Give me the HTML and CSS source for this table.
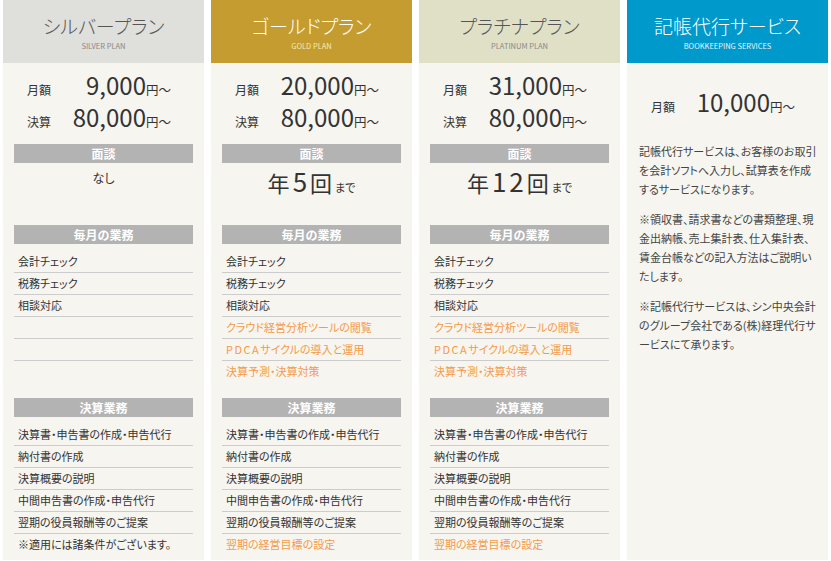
FILE: index.html
```html
<!DOCTYPE html>
<html lang="ja">
<head>
    <meta charset="UTF-8">
    <meta name="viewport" content="width=device-width, initial-scale=1.0">
    <title>料金プラン</title>
    <link rel="stylesheet" href="styles.css">
</head>
<body>
    <div class="plans">
        <!-- シルバー -->
        <div class="plan silver">
            <div class="plan-head">
                <h2>シルバープラン</h2>
                <p>SILVER PLAN</p>
            </div>
            <div class="plan-body">
                <div class="price">
                    <div class="price-row"><span class="price-label">月額</span><span class="price-num">9,000</span><span class="price-unit">円～</span></div>
                    <div class="price-row"><span class="price-label">決算</span><span class="price-num">80,000</span><span class="price-unit">円～</span></div>
                </div>
                <h3 class="bar">面談</h3>
                <p class="meeting">なし</p>
                <h3 class="bar">毎月の業務</h3>
                <ul class="tasks">
                    <li>会計チェック</li>
                    <li>税務チェック</li>
                    <li>相談対応</li>
                    <li></li>
                    <li></li>
                    <li></li>
                </ul>
                <h3 class="bar">決算業務</h3>
                <ul class="tasks">
                    <li>決算書・申告書の作成・申告代行</li>
                    <li>納付書の作成</li>
                    <li>決算概要の説明</li>
                    <li>中間申告書の作成・申告代行</li>
                    <li>翌期の役員報酬等のご提案</li>
                    <li>※適用には諸条件がございます。</li>
                </ul>
            </div>
        </div>

        <!-- ゴールド -->
        <div class="plan gold">
            <div class="plan-head">
                <h2>ゴールドプラン</h2>
                <p>GOLD PLAN</p>
            </div>
            <div class="plan-body">
                <div class="price">
                    <div class="price-row"><span class="price-label">月額</span><span class="price-num">20,000</span><span class="price-unit">円～</span></div>
                    <div class="price-row"><span class="price-label">決算</span><span class="price-num">80,000</span><span class="price-unit">円～</span></div>
                </div>
                <h3 class="bar">面談</h3>
                <p class="meeting big">年<span class="count">5</span>回<small>まで</small></p>
                <h3 class="bar">毎月の業務</h3>
                <ul class="tasks">
                    <li>会計チェック</li>
                    <li>税務チェック</li>
                    <li>相談対応</li>
                    <li class="extra">クラウド経営分析ツールの閲覧</li>
                    <li class="extra"><span class="wide">PDCA</span>サイクルの導入と運用</li>
                    <li class="extra">決算予測・決算対策</li>
                </ul>
                <h3 class="bar">決算業務</h3>
                <ul class="tasks">
                    <li>決算書・申告書の作成・申告代行</li>
                    <li>納付書の作成</li>
                    <li>決算概要の説明</li>
                    <li>中間申告書の作成・申告代行</li>
                    <li>翌期の役員報酬等のご提案</li>
                    <li class="extra">翌期の経営目標の設定</li>
                </ul>
            </div>
        </div>

        <!-- プラチナ -->
        <div class="plan platinum">
            <div class="plan-head">
                <h2>プラチナプラン</h2>
                <p>PLATINUM PLAN</p>
            </div>
            <div class="plan-body">
                <div class="price">
                    <div class="price-row"><span class="price-label">月額</span><span class="price-num">31,000</span><span class="price-unit">円～</span></div>
                    <div class="price-row"><span class="price-label">決算</span><span class="price-num">80,000</span><span class="price-unit">円～</span></div>
                </div>
                <h3 class="bar">面談</h3>
                <p class="meeting big">年<span class="count">12</span>回<small>まで</small></p>
                <h3 class="bar">毎月の業務</h3>
                <ul class="tasks">
                    <li>会計チェック</li>
                    <li>税務チェック</li>
                    <li>相談対応</li>
                    <li class="extra">クラウド経営分析ツールの閲覧</li>
                    <li class="extra"><span class="wide">PDCA</span>サイクルの導入と運用</li>
                    <li class="extra">決算予測・決算対策</li>
                </ul>
                <h3 class="bar">決算業務</h3>
                <ul class="tasks">
                    <li>決算書・申告書の作成・申告代行</li>
                    <li>納付書の作成</li>
                    <li>決算概要の説明</li>
                    <li>中間申告書の作成・申告代行</li>
                    <li>翌期の役員報酬等のご提案</li>
                    <li class="extra">翌期の経営目標の設定</li>
                </ul>
            </div>
        </div>

        <!-- 記帳代行 -->
        <div class="plan bookkeeping">
            <div class="plan-head">
                <h2>記帳代行サービス</h2>
                <p>BOOKKEEPING SERVICES</p>
            </div>
            <div class="plan-body">
                <div class="price single">
                    <div class="price-row"><span class="price-label">月額</span><span class="price-num">10,000</span><span class="price-unit">円～</span></div>
                </div>
                <div class="note">
                    <p>記帳代行サービスは、お客様のお取引を会計ソフトへ入力し、試算表を作成するサービスになります。</p>
                    <p>※領収書、請求書などの書類整理、現金出納帳、売上集計表、仕入集計表、賃金台帳などの記入方法はご説明いたします。</p>
                    <p>※記帳代行サービスは、シン中央会計のグループ会社である(株)経理代行サービスにて承ります。</p>
                </div>
            </div>
        </div>
    </div>
</body>
</html>
```

FILE: styles.css
```css
body {
    margin: 0;
    background: #fff;
    font-family: "Noto Sans CJK JP", "Noto Sans", sans-serif;
    color: #333;
    font-feature-settings: "palt";
}
.plans {
    display: grid;
    grid-template-columns: repeat(4, 201px);
    gap: 7px;
    padding: 0 3px;
}
.plan {
    background: #f6f5ef;
    height: 560px;
}
.plan-head {
    height: 63px;
    text-align: center;
    color: #555;
}
.plan-head h2 {
    margin: 0;
    padding-top: 12px;
    font-size: 19px;
    font-weight: 300;
    line-height: 28px;
}
.plan-head p {
    margin: 0;
    padding-top: 1px;
    font-size: 7.5px;
    line-height: 10px;
    color: #888;
}
.silver .plan-head { background: #dfdfdb; }
.gold .plan-head { background: #c59c2f; color: #fff; }
.gold .plan-head p { color: #f6ecb0; }
.platinum .plan-head { background: #e0e0c6; }
.bookkeeping .plan-head { background: #0099cc; color: #fff; }
.bookkeeping .plan-head p { color: #e4f4fb; }

.plan-body {
    padding: 0 11px;
}
.price {
    padding: 6px 0 11px 13px;
}
.price.single {
    padding-top: 23px;
}
.price-row {
    display: flex;
    align-items: baseline;
    height: 32px;
    line-height: 32px;
}
.price-label {
    width: 30px;
    font-size: 12px;
}
.price-num {
    width: 89px;
    text-align: right;
    font-size: 24px;
    font-weight: 400;
    color: #333;
}
.price-unit {
    font-size: 12.5px;
    font-feature-settings: normal;
}

.bar {
    margin: 0;
    background: #b3b3b3;
    color: #fff;
    font-size: 12px;
    font-weight: bold;
    text-align: center;
    height: 19px;
    line-height: 19px;
}
.meeting {
    margin: 0;
    height: 62px;
    text-align: center;
    font-size: 12px;
    line-height: 30px;
}
.meeting.big {
    font-size: 22px;
    line-height: 39px;
    letter-spacing: 3px;
    color: #333;
}
.meeting .count {
    font-size: 26px;
    line-height: 1;
}
.meeting small {
    font-size: 11px;
    letter-spacing: 0;
}
.tasks {
    list-style: none;
    margin: 7px 0 16px;
    padding: 0;
}
.tasks:last-child {
    margin-bottom: 0;
}
.tasks li {
    height: 21px;
    line-height: 21px;
    padding-left: 4px;
    font-size: 11px;
    border-bottom: 1px solid #ccc;
}
.tasks li:last-child {
    border-bottom: none;
}
.tasks li.extra {
    color: #f79a4a;
}
.wide {
    letter-spacing: 1.5px;
}

.note {
    margin-top: 13px;
    padding-left: 1px;
    font-size: 11px;
    line-height: 19px;
    color: #444;
}
.note p {
    margin: 0 0 11px;
}
```
